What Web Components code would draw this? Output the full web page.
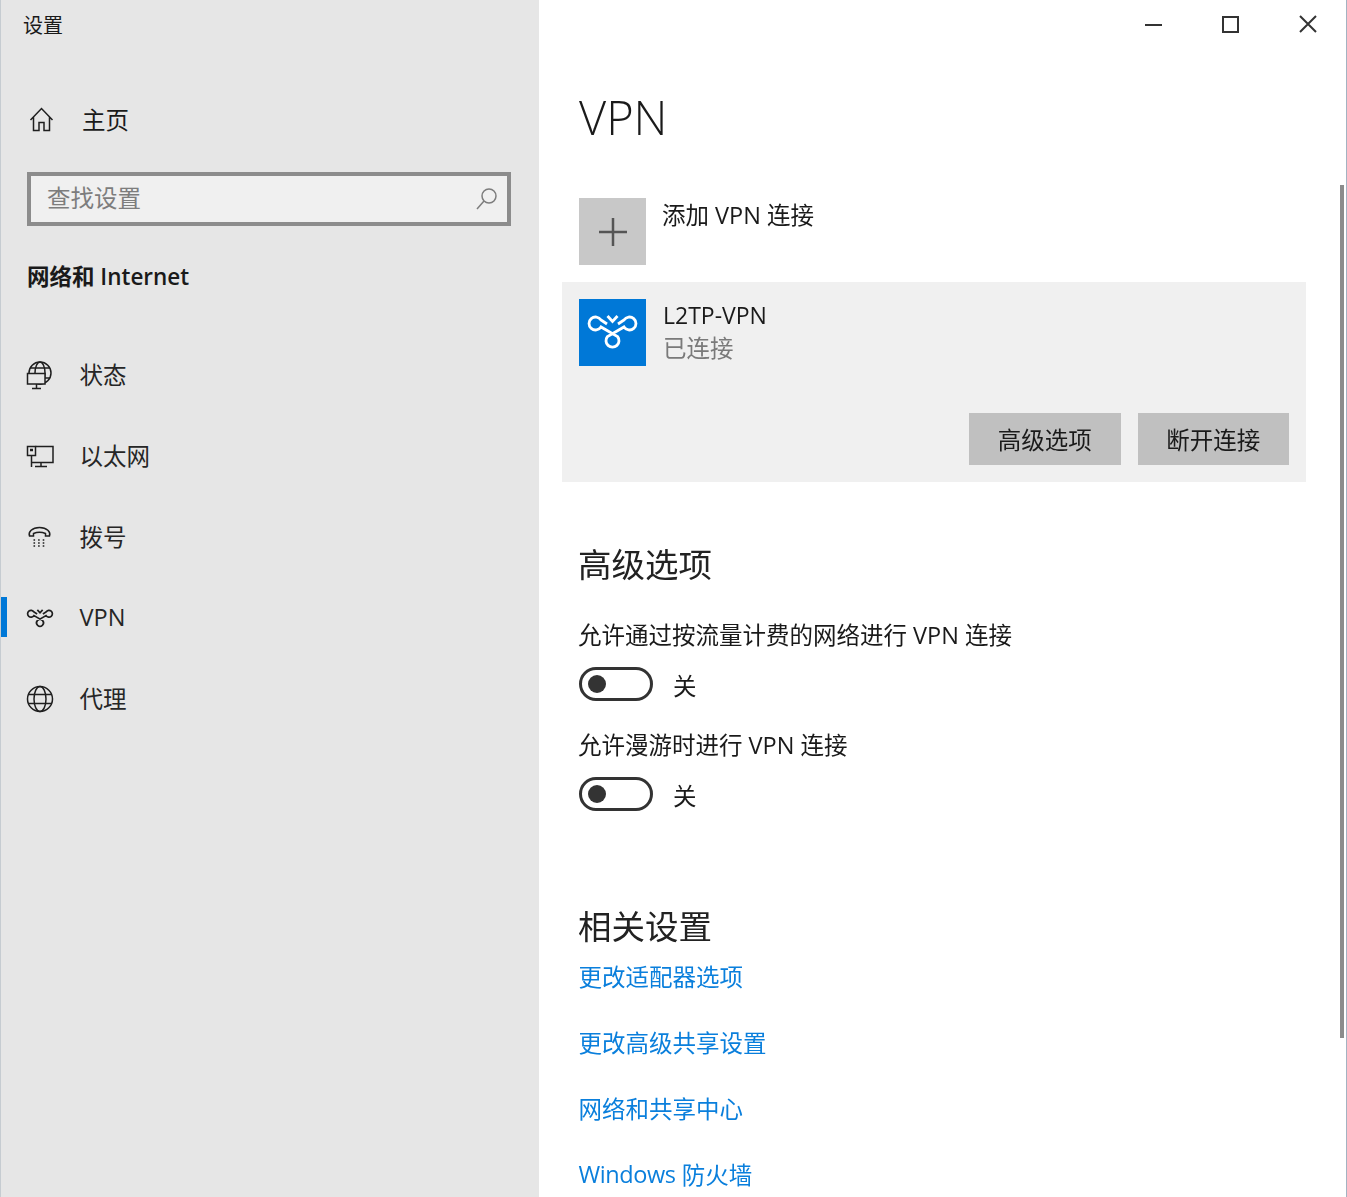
<!DOCTYPE html>
<html lang="zh-CN">
<head>
<meta charset="utf-8">
<title>设置</title>
<style>
html, body { margin: 0; height: 100%; overflow: hidden; background: #fff; }
body { font-family: "Open Sans", "Noto Sans CJK SC", sans-serif; color: #1a1a1a; }
</style>
</head>
<body>
<settings-window>
  <settings-sidebar slot="side">
    <nav-item icon="status">状态</nav-item>
    <nav-item icon="ethernet">以太网</nav-item>
    <nav-item icon="dialup">拨号</nav-item>
    <nav-item icon="vpn" active>VPN</nav-item>
    <nav-item icon="proxy">代理</nav-item>
  </settings-sidebar>
  <vpn-page slot="main"></vpn-page>
</settings-window>

<script>
const knot = 'M28.500 17 33.500 22.500 38.500 17M28 25 22 21A6.500 6.500 0 1 0 22 28L38.500 37.500A6.500 6.500 0 1 1 28.500 37.500L45 28A6.500 6.500 0 1 0 45 21L39 25';

const icons = {
  home: `<svg width="28" height="28" viewBox="0 0 28 28"><path d="M1.500 14 12.500 2.500 23.500 14M4.500 11V24.500H10V16.500H15V24.500H20.500V11"/></svg>`,
  status: `<svg width="30" height="32" viewBox="0 0 30 32"><circle cx="15" cy="14" r="11"/><ellipse cx="15" cy="14" rx="5" ry="11"/><path d="M5 9H25M5 19H25"/><rect x="2.500" y="14.500" width="17.500" height="10.500" fill="#e6e6e6"/><path d="M11.500 25V29M7 29.500H16"/></svg>`,
  ethernet: `<svg width="30" height="26" viewBox="0 0 30 26"><path d="M10.500 3.500H28V19.500H6.500M16 19.500V23.500M10 23.500H22M6.500 12.500V24"/><rect x="2.500" y="3.500" width="8" height="9"/><path stroke-width="2.500" d="M5 7H8"/></svg>`,
  dialup: `<svg width="30" height="26" viewBox="0 0 30 26"><path d="M4.500 12C3 8 7 3.500 14.500 3.500S26 8 24.500 12H20.500V9.500C17 8 12 8 8.500 9.500V12Z"/><path stroke-dasharray="1.600 3" d="M8.500 16H21M8.500 19H21M8.500 22H21"/></svg>`,
  vpn: `<svg width="28" height="22" viewBox="7 14 53 37"><path stroke-width="3.200" d="${knot}"/></svg>`,
  proxy: `<svg width="30" height="30" viewBox="0 0 30 30"><circle cx="15" cy="15" r="12.500"/><ellipse cx="15" cy="15" rx="6" ry="12.500"/><path d="M3.500 10.500H26.500M3.500 19.500H26.500"/></svg>`
};

const svgRule = `svg { display: block; fill: none; stroke: #1f1f1f; stroke-width: 1.500; }`;

const windowTemplate = document.createElement('template');
windowTemplate.innerHTML = `
<style>
:host { display: flex; height: 1197px; position: relative; box-sizing: border-box; border-right: 1px solid #a3b3c2; border-left: 1px solid #c6ccd1; filter: blur(.4px); }
.side { width: 538px; flex: none; background: #e6e6e6; overflow: hidden; }
.main { flex: 1; min-width: 0; overflow: hidden; }
.bar { position: absolute; right: 2px; top: 185px; width: 4px; height: 853px; background: #8c8c8c; }
</style>
<div class="side"><slot name="side"></slot></div>
<div class="main"><slot name="main"></slot></div>
<div class="bar"></div>`;

class SettingsWindow extends HTMLElement {
  connectedCallback() {
    const root = this.attachShadow({ mode: 'open' });
    root.appendChild(windowTemplate.content.cloneNode(true));
  }
}

const sidebarTemplate = document.createElement('template');
sidebarTemplate.innerHTML = `
<style>
${svgRule}
:host { display: block; font-size: 23.500px; }
.title { height: 50px; display: flex; align-items: center; padding: 0 0 2px 22px; box-sizing: border-box; font-size: 20px; }
.home { height: 60px; margin-top: 40px; display: flex; align-items: center; padding-left: 28px; }
.home span { margin: 0 0 2px 25px; }
.search { margin: 22px 0 0 26px; width: 484px; height: 54px; box-sizing: border-box; border: 4px solid #8c8c8c; background: #f0f0f0; display: flex; align-items: center; justify-content: space-between; padding: 0 8px 0 16px; color: #7d7d7d; }
.search span { margin-bottom: 4px; }
.search svg { stroke: #7d7d7d; }
.section { height: 40px; margin: 31px 0 38px 26px; padding-bottom: 4px; box-sizing: border-box; display: flex; align-items: center; font-size: 22.500px; font-weight: 600; }
</style>
<div class="title">设置</div>
<div class="home">${icons.home}<span>主页</span></div>
<div class="search"><span>查找设置</span><svg width="24" height="24" viewBox="0 0 24 24"><circle cx="14" cy="9" r="7"/><path d="M9 14 2 22"/></svg></div>
<div class="section">网络和 Internet</div>
<slot></slot>`;

class SettingsSidebar extends HTMLElement {
  connectedCallback() {
    const root = this.attachShadow({ mode: 'open' });
    root.appendChild(sidebarTemplate.content.cloneNode(true));
  }
}

class NavItem extends HTMLElement {
  connectedCallback() {
    const root = this.attachShadow({ mode: 'open' });
    root.innerHTML = `
    <style>
    ${svgRule}
    :host { display: flex; align-items: center; height: 81px; position: relative; font-size: 23.500px; color: #262626; }
    .icon { width: 30px; margin: 0 0 1px 24px; display: flex; justify-content: center; }
    .label { margin: 0 0 3px 24.500px; }
    .mark { position: absolute; left: -1px; top: 19px; width: 7px; height: 40px; background: #0078d7; }
    </style>
    ${this.hasAttribute('active') ? '<div class="mark"></div>' : ''}
    <div class="icon">${icons[this.getAttribute('icon')]}</div>
    <div class="label"><slot></slot></div>`;
  }
}

class ToggleRow extends HTMLElement {
  connectedCallback() {
    const root = this.attachShadow({ mode: 'open' });
    root.innerHTML = `
    <style>
    :host { display: block; font-size: 23.500px; }
    .text { height: 40px; display: flex; align-items: center; margin-left: -1px; padding-bottom: 4px; box-sizing: border-box; }
    .row { height: 34px; margin-top: 11px; display: flex; align-items: center; }
    .switch { width: 74px; height: 34px; box-sizing: border-box; border: 3.500px solid #333; border-radius: 17px; display: flex; align-items: center; padding-left: 6px; }
    .switch i { width: 18px; height: 18px; border-radius: 50%; background: #333; }
    .state { margin: 2px 0 0 20px; }
    </style>
    <div class="text"><slot></slot></div>
    <div class="row"><div class="switch"><i></i></div><div class="state">关</div></div>`;
  }
}

class SettingLink extends HTMLElement {
  connectedCallback() {
    const root = this.attachShadow({ mode: 'open' });
    root.innerHTML = `
    <style>
    :host { display: flex; align-items: center; height: 40px; margin: 0 0 26px -.5px; font-size: 23.500px; color: #0a7fdc; }
    </style><slot></slot>`;
  }
}

const pageTemplate = document.createElement('template');
pageTemplate.innerHTML = `
<style>
${svgRule}
:host { display: block; padding-left: 40px; }
.controls { height: 48px; display: flex; justify-content: flex-end; gap: 60px; align-items: center; padding-right: 29px; }
.controls svg { stroke: #333; stroke-width: 2; }
h1 { margin: 34px 0 46px; height: 70px; line-height: 70px; font-size: 47px; font-weight: 300; color: #1a1a1a; }
.add { display: flex; height: 67px; margin-bottom: 17px; font-size: 23.500px; }
.tile { width: 67px; height: 67px; flex: none; display: flex; align-items: center; justify-content: center; background: #c8c8c8; }
.tile svg { stroke: #555; stroke-width: 2.500; }
.tile.blue { background: #0078d7; }
.tile.blue svg { stroke: #fff; stroke-width: 2.800; }
.add .text { margin: 0 0 0 16px; height: 34px; padding-bottom: 3px; box-sizing: border-box; display: flex; align-items: center; }
.card { margin-left: -17px; width: 744px; height: 200px; box-sizing: border-box; padding: 17px; background: #f0f0f0; display: flex; flex-direction: column; justify-content: space-between; }
.conn { display: flex; }
.info { margin-left: 17px; font-size: 23px; }
.info div { height: 33px; display: flex; align-items: center; padding-bottom: 2px; box-sizing: border-box; }
.info .sub { color: #7a7a7a; margin-top: -1px; font-size: 23.500px; }
.buttons { display: flex; justify-content: flex-end; gap: 17px; }
.buttons div { width: 151.500px; height: 52px; background: #c0c0c0; display: flex; align-items: center; justify-content: center; font-size: 23.500px; }
h2 { margin: 0 0 0 -1px; height: 60px; line-height: 60px; font-size: 33.500px; font-weight: 400; color: #222; }
.advanced { margin-top: 52px; }
toggle-row { margin-top: 22px; }
toggle-row + toggle-row { margin-top: 25px; }
.related { margin-top: 85px; }
</style>
<div class="controls">
  <svg width="17" height="17" viewBox="0 0 17 17"><path d="M0 9H17"/></svg>
  <svg width="17" height="17" viewBox="0 0 17 17"><rect x="1" y="1" width="15" height="15"/></svg>
  <svg width="18" height="18" viewBox="0 0 18 18"><path d="M1 1 17 17M17 1 1 17"/></svg>
</div>
<h1>VPN</h1>
<div class="add">
  <div class="tile"><svg width="28" height="28" viewBox="0 0 28 28"><path d="M14 0V28M0 14H28"/></svg></div>
  <div class="text">添加 VPN 连接</div>
</div>
<div class="card">
  <div class="conn">
    <div class="tile blue"><svg width="67" height="67" viewBox="0 0 67 67"><path d="${knot}"/></svg></div>
    <div class="info"><div>L2TP-VPN</div><div class="sub">已连接</div></div>
  </div>
  <div class="buttons"><div>高级选项</div><div>断开连接</div></div>
</div>
<h2 class="advanced">高级选项</h2>
<toggle-row>允许通过按流量计费的网络进行 VPN 连接</toggle-row>
<toggle-row>允许漫游时进行 VPN 连接</toggle-row>
<h2 class="related">相关设置</h2>
<setting-link>更改适配器选项</setting-link>
<setting-link>更改高级共享设置</setting-link>
<setting-link>网络和共享中心</setting-link>
<setting-link><span style="letter-spacing: -.4px">Windows</span>&nbsp;防火墙</setting-link>`;

class VpnPage extends HTMLElement {
  connectedCallback() {
    const root = this.attachShadow({ mode: 'open' });
    root.appendChild(pageTemplate.content.cloneNode(true));
  }
}

customElements.define('settings-window', SettingsWindow);
customElements.define('settings-sidebar', SettingsSidebar);
customElements.define('nav-item', NavItem);
customElements.define('toggle-row', ToggleRow);
customElements.define('setting-link', SettingLink);
customElements.define('vpn-page', VpnPage);
</script>
</body>
</html>
